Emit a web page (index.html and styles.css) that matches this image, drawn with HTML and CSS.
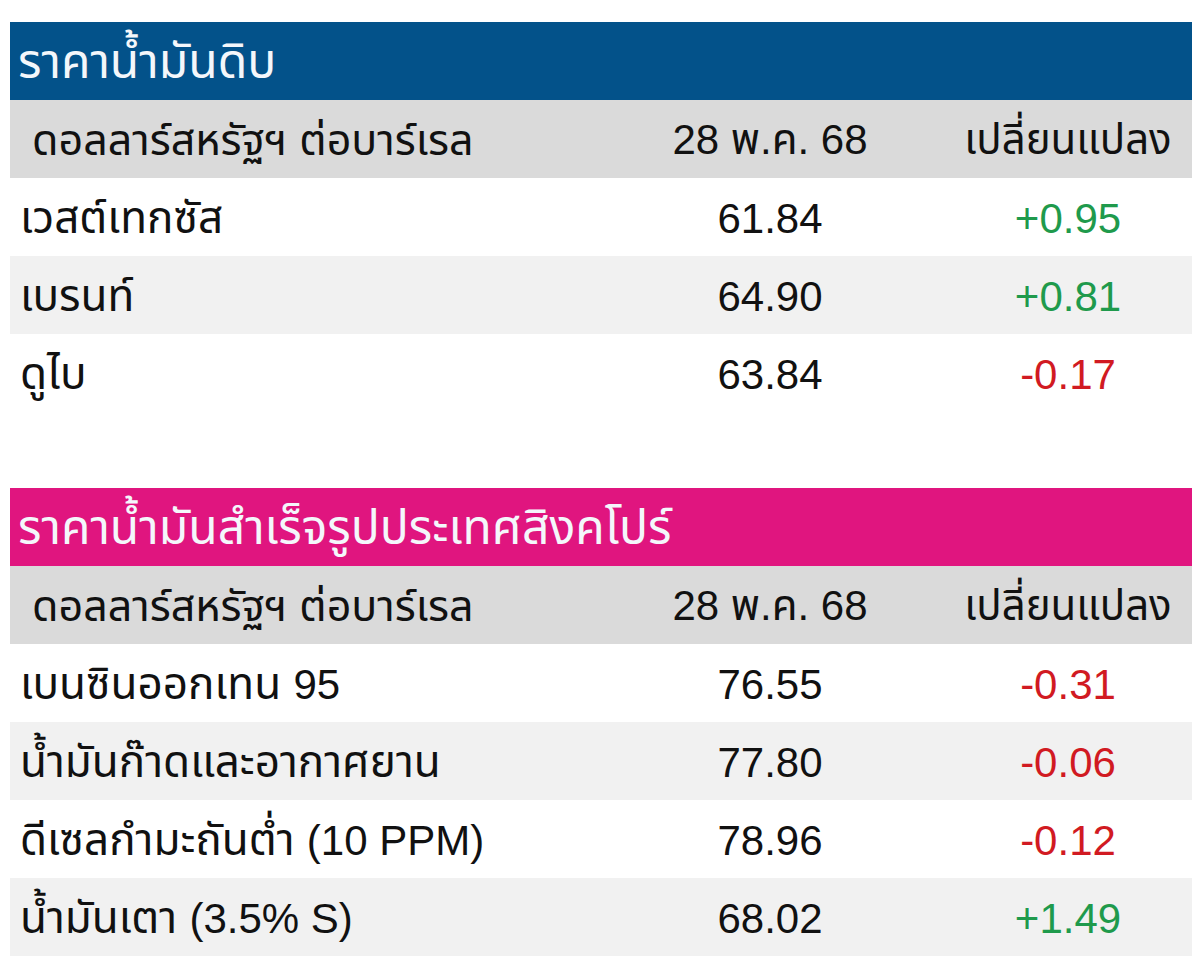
FILE: index.html
```html
<!DOCTYPE html>
<html lang="th">
<head>
<meta charset="utf-8">
<title>ราคาน้ำมัน</title>
<link rel="stylesheet" href="styles.css">
</head>
<body>
<div class="page">
  <section class="table">
    <div class="title title-blue">ราคาน้ำมันดิบ</div>
    <div class="row head">
      <div class="c1">ดอลลาร์สหรัฐฯ ต่อบาร์เรล</div>
      <div class="c2">28 พ.ค. 68</div>
      <div class="c3">เปลี่ยนแปลง</div>
    </div>
    <div class="row">
      <div class="c1">เวสต์เทกซัส</div>
      <div class="c2">61.84</div>
      <div class="c3 up">+0.95</div>
    </div>
    <div class="row alt">
      <div class="c1">เบรนท์</div>
      <div class="c2">64.90</div>
      <div class="c3 up">+0.81</div>
    </div>
    <div class="row">
      <div class="c1">ดูไบ</div>
      <div class="c2">63.84</div>
      <div class="c3 down">-0.17</div>
    </div>
  </section>

  <section class="table second">
    <div class="title title-pink">ราคาน้ำมันสำเร็จรูปประเทศสิงคโปร์</div>
    <div class="row head">
      <div class="c1">ดอลลาร์สหรัฐฯ ต่อบาร์เรล</div>
      <div class="c2">28 พ.ค. 68</div>
      <div class="c3">เปลี่ยนแปลง</div>
    </div>
    <div class="row">
      <div class="c1">เบนซินออกเทน <span class="num">95</span></div>
      <div class="c2">76.55</div>
      <div class="c3 down">-0.31</div>
    </div>
    <div class="row alt">
      <div class="c1">น้ำมันก๊าดและอากาศยาน</div>
      <div class="c2">77.80</div>
      <div class="c3 down">-0.06</div>
    </div>
    <div class="row">
      <div class="c1">ดีเซลกำมะถันต่ำ <span class="num">(10 PPM)</span></div>
      <div class="c2">78.96</div>
      <div class="c3 down">-0.12</div>
    </div>
    <div class="row alt">
      <div class="c1">น้ำมันเตา <span class="num">(3.5% S)</span></div>
      <div class="c2">68.02</div>
      <div class="c3 up">+1.49</div>
    </div>
  </section>
</div>
</body>
</html>
```

FILE: styles.css
```css
html, body {
  margin: 0;
  padding: 0;
  background: #ffffff;
}

.page {
  padding: 22px 8px 0 10px;
  font-family: "Liberation Sans", Tahoma, "Noto Sans Thai", "Noto Sans", sans-serif;
  color: #111111;
}

.table {
  width: 1182px;
}

.second {
  margin-top: 76px;
}

.title {
  height: 78px;
  display: flex;
  align-items: center;
  padding: 4px 0 0 8px;
  box-sizing: border-box;
  color: #f4f7fb;
  font-size: 48px;
  white-space: nowrap;
}

.title-blue {
  background: #03528a;
}

.title-pink {
  background: #e0157f;
}

.row {
  display: grid;
  grid-template-columns: 630px 260px 292px;
  height: 78px;
  box-sizing: border-box;
  padding-top: 4px;
  align-items: center;
  font-size: 44px;
  background: #ffffff;
}

.row.alt {
  background: #f1f1f1;
}

.row.head {
  background: #dadada;
  font-size: 43px;
}

.c1 {
  padding-left: 10px;
  white-space: nowrap;
}

.head .c1 {
  padding-left: 22px;
}

.num {
  font-size: 42px;
}

.c2 {
  text-align: center;
  font-size: 42px;
  white-space: nowrap;
}

.c3 {
  text-align: center;
  padding-left: 44px;
  font-size: 42px;
  white-space: nowrap;
}

.up {
  color: #1f9a4c;
}

.down {
  color: #d11a22;
}
```
